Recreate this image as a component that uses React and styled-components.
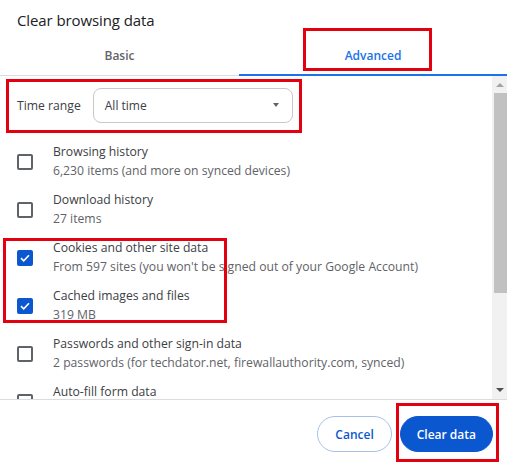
import React from 'react';
import styled, { createGlobalStyle } from 'styled-components';

const GlobalStyle = createGlobalStyle`
    body {
        margin: 0;
        background: #ffffff;
        font-family: "Open Sans", "Noto Sans", sans-serif;
    }
`

const Dialog = styled.div`
    width: 507px;
    height: 469px;
    display: flex;
    flex-direction: column;
    background: #ffffff;
    color: #3c4043;
    overflow: hidden;
`

const Title = styled.div`
    padding: 10px 17px 0;
    height: 27px;
    font-size: 15px;
    color: #202124;
    letter-spacing: -0.1px;
`

const Tabs = styled.div`
    display: grid;
    grid-template-columns: 239px 1fr;
    height: 38px;
    border-bottom: 1px solid #dadce0;
`

const Tab = styled.div`
    position: relative;
    display: flex;
    align-items: center;
    justify-content: center;
    font-size: 12px;
    font-weight: 600;
    color: ${p => (p.$active ? '#1a73e8' : '#5f6368')};
    border-bottom: 2px solid ${p => (p.$active ? '#1a73e8' : 'transparent')};
    margin-bottom: -1px;
`

const Mark = styled.div`
    position: absolute;
    border: 3px solid #e3000f;
    pointer-events: none;
`

const Body = styled.div`
    display: flex;
    height: 323px;
    border-bottom: 1px solid #dadce0;
`

const Content = styled.div`
    flex: 1;
    overflow: hidden;
    padding: 11px 0 0 17px;
    position: relative;
`

const RangeRow = styled.div`
    display: flex;
    align-items: center;
    gap: 12px;
    height: 36px;
    margin-bottom: 19px;
    font-size: 12.2px;
    color: #3c4043;
`

const Select = styled.div`
    width: 200px;
    height: 35px;
    box-sizing: border-box;
    border: 1px solid #c8c8c8;
    border-radius: 8px;
    display: flex;
    align-items: center;
    justify-content: space-between;
    padding: 0 13px 0 11px;
    font-size: 12px;
    color: #3c4043;
`

const Caret = styled.span`
    width: 0;
    height: 0;
    border-left: 3.5px solid transparent;
    border-right: 3.5px solid transparent;
    border-top: 4px solid #5f6368;
`

const Item = styled.div`
    display: flex;
    align-items: center;
    height: 38px;
    margin-bottom: 10px;
    gap: 20px;
`

const Box = styled.div`
    width: 16px;
    height: 16px;
    box-sizing: border-box;
    border-radius: 2px;
    border: 2px solid ${p => (p.$checked ? '#0b57d0' : '#5f6368')};
    background: ${p => (p.$checked ? '#0b57d0' : 'transparent')};
    display: flex;
    align-items: center;
    justify-content: center;
    flex-shrink: 0;
    margin-top: 1px;
`

const Texts = styled.div`
    display: flex;
    flex-direction: column;
    font-size: 12.2px;
    line-height: 19px;
    white-space: nowrap;
`

const ItemTitle = styled.span`
    color: #3c4043;
`

const ItemSub = styled.span`
    color: #5f6368;
    min-height: 19px;
`

const Scrollbar = styled.div`
    width: 15px;
    background: #f1f1f1;
    display: flex;
    flex-direction: column;
    align-items: center;
`

const Arrow = styled.div`
    width: 0;
    height: 0;
    border-left: 4px solid transparent;
    border-right: 4px solid transparent;
    ${p => (p.$up
        ? 'border-bottom: 4px solid #a3a3a3; margin: 7px 0 6px;'
        : 'border-top: 4px solid #505050; margin: auto 0 7px;')}
`

const Thumb = styled.div`
    width: 13px;
    margin-left: 1px;
    height: 200px;
    background: #c1c1c1;
`

const Footer = styled.div`
    flex: 1;
    display: flex;
    justify-content: flex-end;
    align-items: flex-start;
    gap: 8px;
    padding: 16px 14px 0 0;
    position: relative;
`

const Button = styled.button`
    height: 36px;
    border-radius: 18px;
    font-family: inherit;
    font-size: 12px;
    font-weight: 600;
    padding: 0 ${p => (p.$primary ? '16px' : '17px')};
    border: 1px solid ${p => (p.$primary ? '#0b57d0' : '#a8c0e8')};
    background: ${p => (p.$primary ? '#0b57d0' : '#ffffff')};
    color: ${p => (p.$primary ? '#ffffff' : '#0b57d0')};
    cursor: pointer;
`

const items = [
    { title: 'Browsing history', sub: '6,230 items (and more on synced devices)' },
    { title: 'Download history', sub: '27 items' },
    { title: 'Cookies and other site data', sub: "From 597 sites (you won't be signed out of your Google Account)", checked: true },
    { title: 'Cached images and files', sub: '319 MB', checked: true },
    { title: 'Passwords and other sign-in data', sub: '2 passwords (for techdator.net, firewallauthority.com, synced)' },
    { title: 'Auto-fill form data', sub: '' },
];

function Check() {
    return (
        <svg width="10" height="8" viewBox="0 0 10 8">
            <path d="M1 4.2 L3.7 6.8 L9 1.3" fill="none" stroke="#fff" strokeWidth="1.6" />
        </svg>
    );
}

export default function App() {
    return (
        <>
            <GlobalStyle />
            <Dialog>
                <Title>Clear browsing data</Title>
                <Tabs>
                    <Tab>Basic</Tab>
                    <Tab $active>
                        Advanced
                        <Mark style={{ left: 64, top: -9, width: 123, height: 37 }} />
                    </Tab>
                </Tabs>
                <Body>
                    <Content>
                        <Mark style={{ left: 6, top: 3, width: 290, height: 48 }} />
                        <Mark style={{ left: 3, top: 162, width: 218, height: 79 }} />
                        <RangeRow>
                            Time range
                            <Select>
                                All time
                                <Caret />
                            </Select>
                        </RangeRow>
                        {items.map(it => (
                            <Item key={it.title}>
                                <Box $checked={it.checked}>{it.checked && <Check />}</Box>
                                <Texts>
                                    <ItemTitle>{it.title}</ItemTitle>
                                    <ItemSub>{it.sub}</ItemSub>
                                </Texts>
                            </Item>
                        ))}
                    </Content>
                    <Scrollbar>
                        <Arrow $up />
                        <Thumb />
                        <Arrow />
                    </Scrollbar>
                </Body>
                <Footer>
                    <Button>Cancel</Button>
                    <Button $primary>Clear data</Button>
                    <Mark style={{ right: 8, top: 3, width: 97, height: 53 }} />
                </Footer>
            </Dialog>
        </>
    );
}
